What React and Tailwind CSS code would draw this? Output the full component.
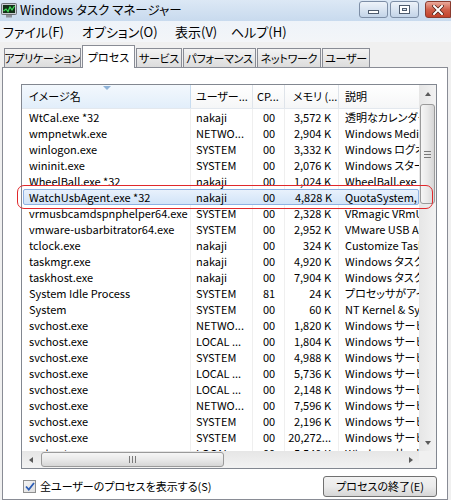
import React from "react";

// Windows 7 タスク マネージャー — プロセス タブ
const jp = "font-['Noto_Sans_CJK_JP',sans-serif] [font-feature-settings:'palt']";

const rows = [
  ["WtCal.exe *32", "nakaji", "00", "3,572 K", "透明なカレンダー"],
  ["wmpnetwk.exe", "NETWO...", "00", "2,904 K", "Windows Media Player Network"],
  ["winlogon.exe", "SYSTEM", "00", "3,332 K", "Windows ログオン アプリケーション"],
  ["wininit.exe", "SYSTEM", "00", "2,076 K", "Windows スタートアップ"],
  ["WheelBall.exe *32", "nakaji", "00", "1,024 K", "WheelBall.exe"],
  ["WatchUsbAgent.exe *32", "nakaji", "00", "4,828 K", "QuotaSystem, Inc."],
  ["vrmusbcamdspnphelper64.exe", "SYSTEM", "00", "2,328 K", "VRmagic VRmUsbCam"],
  ["vmware-usbarbitrator64.exe", "SYSTEM", "00", "2,952 K", "VMware USB Arbitration"],
  ["tclock.exe", "nakaji", "00", "324 K", "Customize Taskbar Clock"],
  ["taskmgr.exe", "nakaji", "00", "4,920 K", "Windows タスク マネージャー"],
  ["taskhost.exe", "nakaji", "00", "7,904 K", "Windows タスクのホスト"],
  ["System Idle Process", "SYSTEM", "81", "24 K", "プロセッサがアイドル状態"],
  ["System", "SYSTEM", "00", "60 K", "NT Kernel & System"],
  ["svchost.exe", "NETWO...", "00", "1,820 K", "Windows サービスのホスト"],
  ["svchost.exe", "LOCAL ...", "00", "1,804 K", "Windows サービスのホスト"],
  ["svchost.exe", "SYSTEM", "00", "4,988 K", "Windows サービスのホスト"],
  ["svchost.exe", "LOCAL ...", "00", "5,736 K", "Windows サービスのホスト"],
  ["svchost.exe", "LOCAL ...", "00", "2,148 K", "Windows サービスのホスト"],
  ["svchost.exe", "NETWO...", "00", "7,596 K", "Windows サービスのホスト"],
  ["svchost.exe", "SYSTEM", "00", "2,196 K", "Windows サービスのホスト"],
  ["svchost.exe", "SYSTEM", "00", "20,272...", "Windows サービスのホスト"],
  ["svchost.exe", "LOCAL ...", "00", "5,540 K", "Windows サービスのホスト"],
];

const tabs = [
  ["アプリケーション", "w-[77px]"],
  ["プロセス", "w-[53px]"],
  ["サービス", "w-[46px]"],
  ["パフォーマンス", "w-[73px]"],
  ["ネットワーク", "w-[64px]"],
  ["ユーザー", "w-[48px]"],
];

function AppIcon() {
  return (
    <svg width="16" height="15" viewBox="0 0 16 15">
      <rect x="0.5" y="0.5" width="15" height="11" rx="1" fill="#c9ccd1" stroke="#6b6f76" />
      <rect x="2" y="2" width="12" height="8" fill="#123018" />
      <polyline points="2.5,8 5,6 7,8.5 9,4 11,7 13.5,3" fill="none" stroke="#3ee05a" strokeWidth="1.2" />
      <rect x="5" y="12" width="6" height="2.5" fill="#8d9199" />
    </svg>
  );
}

function CaptionButton({ kind }) {
  if (kind === "close") {
    return (
      <div className="w-[26px] h-[17px] rounded-l-[3px] border border-[#8a3b2f] bg-gradient-to-b from-[#e9a99c] via-[#d0604b] to-[#c2412a] flex items-center justify-center">
        <svg width="12" height="10" viewBox="0 0 12 10">
          <path d="M2 1 L10 9 M10 1 L2 9" stroke="#4a1d16" strokeWidth="3.4" strokeLinecap="square" />
          <path d="M2 1 L10 9 M10 1 L2 9" stroke="#ffffff" strokeWidth="2" strokeLinecap="square" />
        </svg>
      </div>
    );
  }
  return (
    <div className="w-[29px] h-[17px] rounded-[3px] border border-[#7d8ea6] bg-gradient-to-b from-[#eef3f9] via-[#d9e4f1] to-[#c3d4e8] flex items-center justify-center">
      {kind === "min" ? (
        <div className="w-[11px] h-[4px] mt-[5px] bg-white border border-[#4e5b6d]" />
      ) : (
        <div className="w-[11px] h-[9px] bg-white border border-[#4e5b6d] flex items-center justify-center">
          <div className="w-[5px] h-[3px] bg-[#d9e4f1] border border-[#4e5b6d]" />
        </div>
      )}
    </div>
  );
}

function Arrow({ dir }) {
  const pts = {
    up: "1,5 4,1 7,5",
    down: "1,1 4,5 7,1",
    left: "5,1 1,4 5,7",
    right: "1,1 5,4 1,7",
  }[dir];
  const vertical = dir === "up" || dir === "down";
  return (
    <svg width={vertical ? 8 : 6} height={vertical ? 6 : 8} viewBox={vertical ? "0 0 8 6" : "0 0 6 8"}>
      <polygon points={pts} fill="#5a5a5a" />
    </svg>
  );
}

function Row({ r, selected }) {
  return (
    <div
      className={`flex h-[16px] shrink-0 text-[11px] leading-[16px] text-black whitespace-nowrap ${
        selected ? "relative" : ""
      }`}
    >
      {selected && (
        <div className="absolute inset-y-0 left-[1px] right-0 rounded-[2px] border border-[#8db2e3] bg-gradient-to-b from-[#e8f1fc] to-[#d2e4f8]" />
      )}
      <div className={`relative w-[169px] shrink-0 overflow-hidden pl-[7px] ${selected ? "" : "border-r border-[#efefef]"}`}>{r[0]}</div>
      <div className={`relative w-[62px] shrink-0 overflow-hidden pl-[5px] ${selected ? "" : "border-r border-[#efefef]"}`}>{r[1]}</div>
      <div className={`relative w-[32px] shrink-0 overflow-hidden pl-[10px] ${selected ? "" : "border-r border-[#efefef]"}`}>{r[2]}</div>
      <div className={`relative w-[54px] shrink-0 overflow-hidden pr-[7px] text-right ${selected ? "" : "border-r border-[#efefef]"}`}>{r[3]}</div>
      <div className="relative flex-1 overflow-hidden pl-[6px]">{r[4]}</div>
    </div>
  );
}

export default function App() {
  return (
    <div className={`w-[451px] h-[500px] overflow-hidden flex flex-col bg-[#f0f0f0] ${jp}`}>
      {/* Title bar */}
      <div className="h-[21px] shrink-0 flex items-center bg-gradient-to-b from-[#dce8f5] to-[#c8daee] pl-[1px]">
        <AppIcon />
        <span className="ml-[3px] text-[12.5px] leading-none text-black">Windows タスク マネージャー</span>
        <div className="ml-auto flex items-center gap-[2px] self-start mt-[1px]">
          <CaptionButton kind="min" />
          <CaptionButton kind="max" />
          <div className="w-[2px]" />
          <CaptionButton kind="close" />
        </div>
      </div>

      {/* Menu bar */}
      <div className="h-[21px] shrink-0 flex items-center bg-gradient-to-b from-[#eef3f9] to-[#f3f5f8] text-[13px] text-black whitespace-nowrap">
        <span className="ml-[3px] w-[79px]">ファイル(F)</span>
        <span className="w-[93px]">オプション(O)</span>
        <span className="w-[56px]">表示(V)</span>
        <span>ヘルプ(H)</span>
      </div>

      {/* Tabs */}
      <div className="h-[26px] shrink-0 flex items-end gap-[1px] pl-[4px] -mb-px relative z-10">
        {tabs.map(([label, w]) =>
          label === "プロセス" ? (
            <div
              key={label}
              className={`${w} h-[23px] bg-white border border-b-0 border-[#898c95] flex items-center justify-center text-[11px] text-black`}
            >
              {label}
            </div>
          ) : (
            <div
              key={label}
              className={`${w} h-[20px] bg-gradient-to-b from-[#f3f3f3] to-[#dcdcdc] border border-[#898c95] flex items-center justify-center text-[11px] tracking-[-0.3px] text-black whitespace-nowrap overflow-hidden`}
            >
              {label}
            </div>
          )
        )}
      </div>

      {/* Tab page */}
      <div className="ml-[2px] w-[446px] flex-1 bg-white border border-[#898c95] flex flex-col">
        {/* List view */}
        <div className="relative ml-[18px] mt-[16px] w-[416px] h-[385px] shrink-0 border border-[#828790] flex flex-col bg-white">
          <div className="flex flex-1 min-h-0">
            <div className="flex-1 min-w-0 flex flex-col overflow-hidden">
              {/* Header */}
              <div className="h-[24px] shrink-0 flex text-[11px] text-black whitespace-nowrap border-b border-[#e3e8ee]">
                <div className="relative w-[169px] shrink-0 pl-[7px] flex items-center bg-gradient-to-b from-[#f3f8fd] to-[#e2eefa] border-r border-[#c7dcf0]">
                  <svg className="absolute left-[81px] top-[1px]" width="8" height="5" viewBox="0 0 8 5">
                    <polygon points="0,0 8,0 4,4" fill="#8fb3d8" />
                  </svg>
                  イメージ名
                </div>
                <div className="w-[62px] shrink-0 pl-[5px] flex items-center overflow-hidden bg-gradient-to-b from-white to-[#f5f6f7] border-r border-[#dfe4ea]">ユーザー...</div>
                <div className="w-[32px] shrink-0 pl-[4px] flex items-center overflow-hidden bg-gradient-to-b from-white to-[#f5f6f7] border-r border-[#dfe4ea]">CP...</div>
                <div className="w-[54px] shrink-0 pl-[8px] flex items-center overflow-hidden bg-gradient-to-b from-white to-[#f5f6f7] border-r border-[#dfe4ea]">メモリ (...</div>
                <div className="flex-1 pl-[6px] flex items-center bg-gradient-to-b from-white to-[#f5f6f7]">説明</div>
              </div>
              {/* Rows */}
              <div className="flex flex-col">
                {rows.map((r, i) => (
                  <Row key={i} r={r} selected={i === 5} />
                ))}
              </div>
            </div>

            {/* Vertical scrollbar */}
            <div className="w-[17px] shrink-0 flex flex-col bg-gradient-to-r from-[#e6e6e6] to-[#f2f2f2]">
              <div className="h-[17px] flex items-center justify-center">
                <Arrow dir="up" />
              </div>
              <div className="mt-[2px] h-[100px] mx-[1px] rounded-[3px] border border-[#9a9a9a] bg-gradient-to-r from-[#f6f6f6] via-[#e9e9e9] to-[#d6d6d6] flex flex-col items-center justify-center gap-[2px]">
                <div className="w-[7px] h-px bg-[#7a7a7a]" />
                <div className="w-[7px] h-px bg-[#7a7a7a]" />
                <div className="w-[7px] h-px bg-[#7a7a7a]" />
              </div>
              <div className="flex-1" />
              <div className="h-[17px] flex items-center justify-center">
                <Arrow dir="down" />
              </div>
            </div>
          </div>

          {/* Horizontal scrollbar */}
          <div className="h-[17px] shrink-0 flex bg-gradient-to-b from-[#e6e6e6] to-[#f2f2f2]">
            <div className="w-[17px] flex items-center justify-center">
              <Arrow dir="left" />
            </div>
            <div className="ml-[2px] w-[183px] my-[1px] rounded-[3px] border border-[#9a9a9a] bg-gradient-to-b from-[#f6f6f6] via-[#e9e9e9] to-[#d6d6d6] flex items-center justify-center gap-[2px]">
              <div className="w-px h-[7px] bg-[#7a7a7a]" />
              <div className="w-px h-[7px] bg-[#7a7a7a]" />
              <div className="w-px h-[7px] bg-[#7a7a7a]" />
            </div>
            <div className="flex-1" />
            <div className="w-[17px] flex items-center justify-center">
              <Arrow dir="right" />
            </div>
            <div className="w-[17px] bg-[#f0f0f0]" />
          </div>

          {/* Red annotation around the selected process */}
          <div className="absolute left-[-5px] top-[100px] w-[416px] h-[24px] rounded-[7px] border-[1.5px] border-[#e0282b] pointer-events-none" />
        </div>

        {/* Bottom controls */}
        <div className="mt-[7px] pl-[20px] pr-[10px] flex items-center justify-between">
          <div className="flex items-center gap-[4px] text-[11px] text-black">
            <div className="w-[13px] h-[13px] border border-[#8e8f8f] bg-gradient-to-br from-[#f4f4f4] to-[#dedede] flex items-center justify-center">
              <svg width="10" height="9" viewBox="0 0 10 9">
                <path d="M1 4.5 L3.8 7.5 L9 1" fill="none" stroke="#2a5cb5" strokeWidth="1.8" />
              </svg>
            </div>
            <span>全ユーザーのプロセスを表示する(S)</span>
          </div>
          <div className="w-[114px] h-[21px] rounded-[3px] border border-[#707070] bg-gradient-to-b from-[#f2f2f2] via-[#ebebeb] to-[#d6d6d6] flex items-center justify-center text-[11px] text-black">
            プロセスの終了(E)
          </div>
        </div>
      </div>
    </div>
  );
}
